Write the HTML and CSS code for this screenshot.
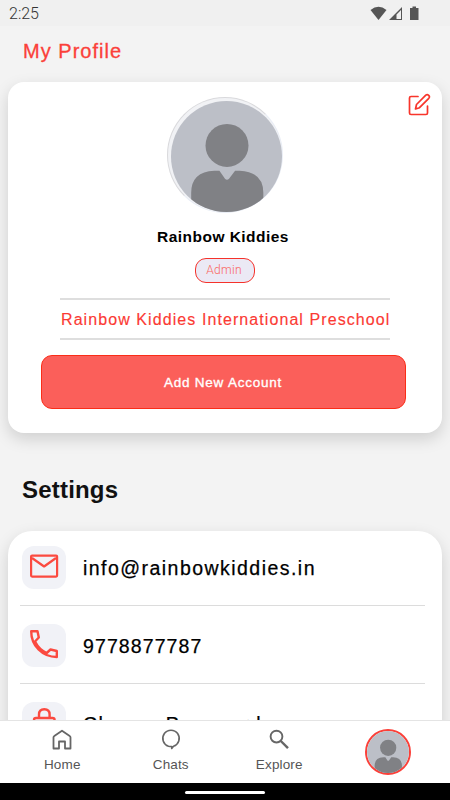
FILE: index.html
```html
<!DOCTYPE html>
<html lang="en">
<head>
<meta charset="utf-8">
<title>My Profile</title>
<link rel="stylesheet" href="styles.css">
</head>
<body>
<svg class="defs" width="0" height="0">
  <symbol id="person" viewBox="0 0 110 110">
    <rect width="110" height="110" fill="#bcbfc7"/>
    <circle cx="55.5" cy="44" r="21.3" fill="#808185"/>
    <path d="M48 69 L53.5 77 Q55.5 79 57.500 77 L63.500 69 H68 Q91.500 70 91.500 91 V110 H20 V91 Q20 70 43 69Z" fill="#808185"/>
  </symbol>
</svg>
<div class="screen">
  <header class="status">
    <span class="clock">2:25</span>
    <svg width="50" height="16" viewBox="0 0 50 16">
      <path d="M0.500 4 Q8.500-2.500 16.500 4 L8.500 14Z" fill="#555"/>
      <path d="M19 14 L32 1 V14Z M26.500 8.500 V13 H31 V4Z" fill="#555" fill-rule="evenodd"/>
      <path d="M40 2 H42.500 V0.500 H46 V2 H48.500 V14 H40Z" fill="#555"/>
    </svg>
  </header>
  <main class="content">
    <h1 class="title">My Profile</h1>
    <section class="card profile">
      <svg class="edit" width="24" height="24" viewBox="0 0 24 24" fill="none" stroke="#f8352b" stroke-width="1.700" stroke-linejoin="round" stroke-linecap="round">
        <path d="M11 3.500 H4 Q2.500 3.500 2.500 5 V20 Q2.500 21.500 4 21.500 H19 Q20.500 21.500 20.500 20 V13"/>
        <path d="M8.500 16 L9.500 11.500 L18.800 2.200 Q20.200 1 21.700 2.300 Q23.100 3.800 21.800 5.300 L12.500 14.700Z"/>
      </svg>
      <div class="avatar"><svg width="111" height="111"><use href="#person"/></svg></div>
      <div class="name">Rainbow Kiddies</div>
      <div class="role">Admin</div>
      <div class="school">Rainbow Kiddies International Preschool</div>
      <button class="add">Add New Account</button>
    </section>
    <h2 class="heading">Settings</h2>
    <section class="card settings">
      <div class="row">
        <span class="tile"><svg width="30" height="30" viewBox="0 0 30 30" fill="none" stroke="#fb4a40" stroke-width="2.200" stroke-linejoin="round"><rect x="2.100" y="4.600" width="26" height="21" rx="1"/><path d="M3 7 L15.100 15.500 L27 7"/></svg></span>
        <span class="label mail">info@rainbowkiddies.in</span>
      </div>
      <div class="row">
        <span class="tile"><svg width="30" height="30" viewBox="0 0 30 30" fill="none" stroke="#fb4a40" stroke-width="2.400" stroke-linejoin="round"><path d="M2.200 2.200 H8.500 L9.800 8.500 L6 12.500 Q10 20.500 17.700 24 L21.500 20.500 L27.800 22 V28 Q17 28 9.500 20.500 Q2.200 13 2.200 2.200Z"/></svg></span>
        <span class="label">9778877787</span>
      </div>
      <div class="row">
        <span class="tile"><svg width="30" height="32" viewBox="0 0 30 32" fill="none" stroke="#fb4a40" stroke-width="2.400" stroke-linejoin="round"><rect x="5" y="12" width="20.600" height="17" rx="2"/><path d="M10 12 V8.500 Q10 3.200 15.300 3.200 Q20.600 3.200 20.600 8.500 V12"/></svg></span>
        <span class="label change">Change Password</span>
      </div>
    </section>
  </main>
  <nav class="tabs">
    <a class="tab"><svg width="22" height="22" viewBox="0 0 22 22" fill="none" stroke="#666" stroke-width="1.800" stroke-linejoin="round"><path d="M2.500 8.500 Q2.500 7.500 3.300 7 L11 1.700 L18.700 7 Q19.500 7.500 19.500 8.500 V19.500 H14 V12.500 H8 V19.500 H2.500Z"/></svg><span>Home</span></a>
    <a class="tab"><svg width="22" height="22" viewBox="0 0 22 22" fill="none" stroke="#666" stroke-width="1.600" stroke-linejoin="round"><path d="M8.500 17.200 A8.200 8.200 0 1 1 13.500 17.200 L11.700 19.500 V17.500 H10 Z"/></svg><span>Chats</span></a>
    <a class="tab"><svg width="22" height="22" viewBox="0 0 22 22" fill="none" stroke="#666" stroke-width="1.900"><circle cx="8.500" cy="7.600" r="5.900"/><path d="M12.800 12 L20 19.200" stroke-width="2.400"/></svg><span>Explore</span></a>
    <a class="tab"><span class="me"><svg width="42" height="42"><use href="#person"/></svg></span></a>
  </nav>
  <footer class="gesture"><span class="pill"></span></footer>
</div>
</body>
</html>
```

FILE: styles.css
```css
* { box-sizing: border-box; }
body {
  margin: 0;
  background: #f3f3f3;
  color: #000;
  font-family: "Liberation Sans", sans-serif;
}
.defs { position: absolute; }
.screen {
  display: flex;
  flex-direction: column;
  width: 450px;
  height: 800px;
  overflow: hidden;
}
.status {
  display: flex;
  flex: none;
  justify-content: space-between;
  height: 26px;
  padding: 6px 30px 0 9px;
  background: #f0f0f0;
}
.clock {
  font: 300 16px/16px Roboto, sans-serif;
  letter-spacing: 0;
  color: #333;
}
.content {
  height: 694px;
  overflow: hidden;
  padding: 0 8px;
}
.title {
  height: 56px;
  margin: 0;
  padding: 14px 0 0 15px;
  font-size: 20px;
  font-weight: 400;
  line-height: 23px;
  letter-spacing: 1.02px;
  color: #fb4039;
  -webkit-text-stroke: 0.3px #fb4039;
}
.card {
  background: #fff;
  box-shadow: 0 6px 16px rgba(0, 0, 0, 0.15);
}
.profile {
  position: relative;
  display: flex;
  flex-direction: column;
  align-items: center;
  width: 434px;
  height: 351px;
  padding-top: 15px;
  border-radius: 16px;
}
.edit {
  position: absolute;
  top: 11px;
  right: 11px;
}
.avatar {
  width: 116px;
  height: 116px;
  padding: 3px 0 0 3px;
  border: 1px solid #d9d9dc;
  border-right-color: #e9edf5;
  border-bottom-color: #e9edf5;
  border-radius: 50%;
  background: #f1f2f5;
}
.avatar svg, .me svg {
  display: block;
  border-radius: 50%;
}
.name {
  margin: 15px 4px 12px 0;
  font-size: 15.5px;
  font-weight: 700;
  line-height: 18px;
  letter-spacing: 0.47px;
}
.role {
  width: 60px;
  height: 25px;
  border: 1px solid #f5322b;
  border-radius: 11px;
  background: #ebe9f5;
  color: #fa6761;
  font: 300 12px/23px Roboto, sans-serif;
  letter-spacing: 0.3px;
  text-align: center;
  padding-right: 2px;
}
.school {
  width: 330px;
  height: 42px;
  margin-top: 15px;
  padding-left: 1px;
  border: solid #dedede;
  border-width: 2px 0;
  font-size: 16px;
  line-height: 40px;
  letter-spacing: 1.08px;
  white-space: nowrap;
  color: #fb3a33;
  -webkit-text-stroke: 0.15px #fb3a33;
}
.add {
  width: 365px;
  height: 54px;
  margin: 15px 4px 0 0;
  padding: 0;
  border: 1px solid #fa2d18;
  border-radius: 11px;
  background: #fb5f5a;
  color: #fff;
  font: 13.5px/54px "Liberation Sans", sans-serif;
  letter-spacing: 0.77px;
  -webkit-text-stroke: 0.35px #fff;
}
.heading {
  height: 98px;
  margin: 0;
  padding: 43px 0 0 14px;
  font-size: 24px;
  line-height: 28px;
  letter-spacing: 0.2px;
  color: #111;
}
.settings {
  width: 434px;
  height: 300px;
  padding: 0 17px 0 12px;
  border-radius: 24px;
}
.row {
  display: flex;
  gap: 17px;
  height: 78px;
  padding: 18px 0 0 2px;
  border-bottom: 1px solid #dcdcdc;
}
.row:first-child { height: 75px; padding-top: 15px; }
.tile {
  display: grid;
  flex: none;
  place-items: center;
  width: 44px;
  height: 43px;
  padding-bottom: 3px;
  border-radius: 12px;
  background: #f1f2f7;
}
.label {
  font-size: 19.5px;
  line-height: 45px;
  letter-spacing: 1.1px;
  -webkit-text-stroke: 0.25px #000;
}
.mail { letter-spacing: 1.46px; }
.change { letter-spacing: 1.3px; }
.tabs {
  display: grid;
  flex: none;
  position: relative;
  grid-template-columns: repeat(4, 108.5px);
  height: 63px;
  padding-left: 8px;
  border-top: 1px solid #e4e4e4;
  background: #fff;
}
.tab {
  display: flex;
  flex-direction: column;
  align-items: center;
  padding-top: 8px;
  font-size: 13.5px;
  line-height: 15px;
  letter-spacing: 0.15px;
  color: #555;
}
.tab svg + span { margin-top: 6px; }
.me {
  margin-top: 0;
  border: 2px solid #fb4039;
  border-radius: 50%;
}
.gesture {
  display: flex;
  flex: none;
  justify-content: center;
  height: 17px;
  padding-top: 8px;
  background: #000;
}
.pill {
  width: 80px;
  height: 3px;
  border-radius: 2px;
  background: #fff;
}
```
